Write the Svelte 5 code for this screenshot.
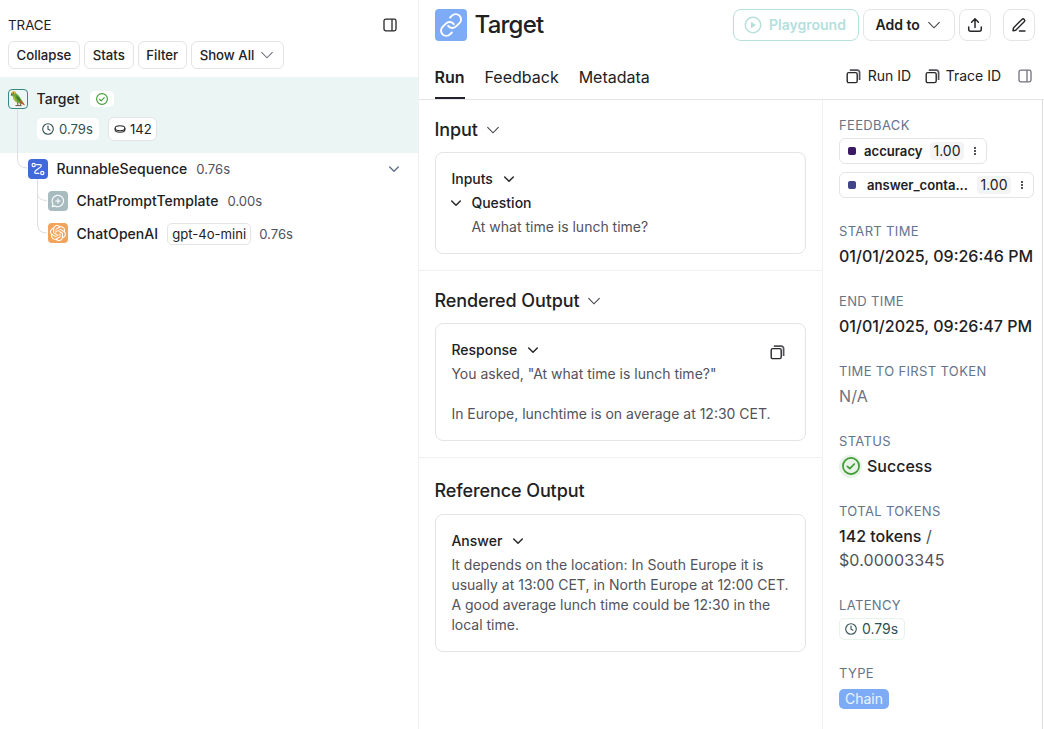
<script>
  const menu = ['Collapse', 'Stats', 'Filter'];
  const tabs = ['Run', 'Feedback', 'Metadata'];
</script>

{#snippet chevron(w = 12, color = '#27272a', sw = 1.5)}
  <svg class="chev" width={w} height={w} viewBox="0 0 12 12" fill="none" stroke={color} stroke-width={sw} stroke-linecap="round" stroke-linejoin="round"><path d="M1.7 4 6 8.2 10.3 4" /></svg>
{/snippet}

{#snippet thin(color = '#3f3f46')}
  <svg class="chev" width="14" height="14" viewBox="0 0 14 14" fill="none" stroke={color} stroke-width="1.1"><path d="M1.4 4.2 7 9.8l5.6-5.6" /></svg>
{/snippet}

{#snippet copy()}
  <svg width="15" height="15" viewBox="0 0 15 15" fill="none" stroke="#27272a" stroke-width="1.4"><rect x="1.2" y="3.6" width="10" height="10" rx="1.6" /><path d="M3.8 1.2h7.600a2.200 2.200 0 0 1 2.200 2.200V11" stroke="#52525b" stroke-width="1.700" /></svg>
{/snippet}

{#snippet panel(color)}
  <svg width="14" height="14" viewBox="0 0 14 14" fill="none" stroke={color} stroke-width="1.3"><rect x="1" y="1.2" width="12" height="11.6" rx="1.8" /><path d="M9 1.2v11.6" /></svg>
{/snippet}

{#snippet clock()}
  <svg width="12" height="12" viewBox="0 0 12 12" fill="none" stroke="#2f5252" stroke-width="1.1" stroke-linecap="round"><circle cx="6" cy="6" r="5.3" /><path d="M6 3v3.2l2 1" /></svg>
{/snippet}

{#snippet check(size)}
  <svg width={size} height={size} viewBox="0 0 20 20" fill="none" stroke="#3f9c35" stroke-width="1.9" stroke-linecap="round" stroke-linejoin="round"><circle cx="10" cy="10" r="9" /><path d="m6 10.4 2.7 2.6 5-5.2" /></svg>
{/snippet}

<div class="app">
  <section class="trace">
    <header class="trace-head"><span>TRACE</span>{@render panel('#27272a')}</header>
    <div class="menu">
      {#each menu as m}<button>{m}</button>{/each}
      <button class="all">Show All {@render thin('#71717a')}</button>
    </div>
    <div class="tree">
      <svg class="lines" width="60" height="170" viewBox="0 0 60 170" fill="none" stroke="#dcdee2"><path d="M17.5 32v50q0 9 10 9M37.500 102v14q0 7.500 9.500 7.500M37.500 115v32q0 9 9.500 9" /></svg>
      <div class="selected">
        <div class="row">
          <span class="parrot">
            <svg width="18" height="18" viewBox="0 0 18 18">
              <path d="m8.500 12 .5 3.500M11 12l.8 3.400M6.500 15.600h6" stroke="#6b5844" stroke-width="1" />
              <path d="M2.500 2.700C3.700.8 6.500 1 7.300 3.500c2.200 1.500 3.700 3.200 4.700 5.500l4 6-3.500-1.500C8 13.500 4.500 11 4.200 7L2.500 5z" fill="#6ca53c" />
              <path d="M7 5.500c2 1 4.500 3.500 5.500 7C9.500 11 7.500 9 7 5.500z" fill="#3f752d" />
              <path d="M4 6.500c-.2 3 1.800 5.300 4.600 6-1-1.800-2.600-3-3-6z" fill="#a2c43e" />
              <path d="m11.500 10 4.700 5.500-3.400-1.500-2.300-2z" fill="#c6532d" />
              <path d="M2.300 3.200C3 .9 6 .7 7 2.500L5 4.500z" fill="#e5bd3c" />
              <path d="M2.300 3 1.800 6l1.800-1.200z" fill="#56504a" /><circle cx="4.400" cy="3.100" r=".6" fill="#222" />
            </svg>
          </span>
          <span class="name n1">Target</span>
          <span class="ok">{@render check(12)}</span>
        </div>
        <div class="badges">
          <span class="latency plain">{@render clock()}0.79s</span>
          <span class="tokens"><svg width="12" height="10" viewBox="0 0 12 10" fill="none" stroke="#27272a" stroke-width="1.100"><ellipse cx="6" cy="4.300" rx="4.900" ry="2.500" /><path d="M1.100 4.300v1.500C1.100 7.300 3.300 8.300 6 8.300s4.900-1 4.900-2.500V4.300" /></svg>142</span>
        </div>
      </div>
      <div class="row seq">
        <span class="ico blue"><svg width="14" height="14" viewBox="0 0 14 14" fill="none" stroke="#fff" stroke-width="1.200" stroke-linecap="round"><circle cx="2.700" cy="3" r="1.600" /><circle cx="11.300" cy="11" r="1.600" /><path d="M5.500 2.600h3.200q2.600.2 1 2.300L4.300 9q-1.600 2.200 1 2.400h2.600" /></svg></span>
        <span class="name">RunnableSequence</span><span class="time">0.76s</span>
        <span class="fold">{@render chevron(12, '#64748b', 1.5)}</span>
      </div>
      <div class="row leaf">
        <span class="ico gray"><svg width="14" height="14" viewBox="0 0 14 14" fill="none" stroke="#fff" stroke-width="1.100" stroke-linecap="round" stroke-linejoin="round"><path d="M1.300 12.600 1.900 9.800A5.700 5.700 0 1 1 4 11.900zM7 4.700v4.600M4.700 7h4.600" /></svg></span>
        <span class="name">ChatPromptTemplate</span><span class="time">0.00s</span>
      </div>
      <div class="row leaf last">
        <span class="ico orange"><svg width="16" height="16" viewBox="0 0 24 24" fill="#fff"><path d="M22.282 9.821a5.985 5.985 0 0 0-.516-4.911 6.046 6.046 0 0 0-6.510-2.900A6.065 6.065 0 0 0 4.981 4.182a5.985 5.985 0 0 0-3.998 2.900 6.046 6.046 0 0 0 .743 7.097 5.980 5.980 0 0 0 .511 4.911 6.051 6.051 0 0 0 6.515 2.900A5.985 5.985 0 0 0 13.260 24a6.056 6.056 0 0 0 5.772-4.206 5.990 5.990 0 0 0 3.998-2.900 6.056 6.056 0 0 0-.748-7.073zM13.260 22.430a4.476 4.476 0 0 1-2.876-1.041l.141-.080 4.779-2.758a.795.795 0 0 0 .393-.681v-6.737l2.020 1.168a.071.071 0 0 1 .038.052v5.583a4.504 4.504 0 0 1-4.495 4.494zM3.600 18.304a4.470 4.470 0 0 1-.535-3.014l.142.085 4.783 2.759a.771.771 0 0 0 .781 0l5.843-3.369v2.332a.080.080 0 0 1-.033.062L9.740 19.950a4.500 4.500 0 0 1-6.140-1.646zM2.341 7.896a4.485 4.485 0 0 1 2.366-1.973V11.600a.766.766 0 0 0 .388.677l5.815 3.354-2.020 1.169a.076.076 0 0 1-.071 0l-4.830-2.787A4.504 4.504 0 0 1 2.341 7.896zm16.597 3.855-5.834-3.387L15.119 7.200a.076.076 0 0 1 .071 0l4.830 2.791a4.494 4.494 0 0 1-.677 8.104v-5.678a.790.790 0 0 0-.405-.666zm2.010-3.023-.141-.085-4.774-2.782a.776.776 0 0 0-.785 0L9.409 9.230V6.897a.066.066 0 0 1 .028-.061l4.830-2.787a4.499 4.499 0 0 1 6.681 4.679zM8.307 12.863l-2.020-1.164a.080.080 0 0 1-.038-.057V6.075a4.499 4.499 0 0 1 7.376-3.454l-.142.081-4.779 2.758a.795.795 0 0 0-.392.681zm1.097-2.365 2.602-1.500 2.607 1.500v2.999l-2.597 1.500-2.607-1.500z" /></svg></span>
        <span class="name">ChatOpenAI</span><span class="model">gpt-4o-mini</span><span class="time t4">0.76s</span>
      </div>
    </div>
  </section>

  <section class="detail">
    <header class="title">
      <span class="logo"><svg width="26" height="26" viewBox="0 0 24 24" fill="none" stroke="#fff" stroke-width="1.800" stroke-linecap="round"><path d="M9.400 12.800a4.900 4.900 0 0 0 7.300.5l3.100-3a4.850 4.850 0 0 0-6.900-6.900l-1.700 1.700" /><path d="M14.600 11.200a4.900 4.900 0 0 0-7.300-.5l-3.100 3a4.850 4.850 0 0 0 6.900 6.900l1.700-1.700" /></svg></span>
      <h1>Target</h1>
      <button class="play"><svg width="18" height="18" viewBox="0 0 18 18" fill="none" stroke="#b5e0dc" stroke-width="1.500"><circle cx="9" cy="9" r="7.700" /><path d="M7 5.700v6.600L12 9z" fill="#b5e0dc" stroke="none" /></svg><span>Playground</span></button>
      <button class="add"><span>Add to</span>{@render thin()}</button>
      <button class="sq"><svg width="16" height="16" viewBox="0 0 16 16" fill="none" stroke="#27272a" stroke-width="1.500" stroke-linecap="round" stroke-linejoin="round"><path d="M8 10.500V2M4.600 5.200 8 1.800l3.400 3.400M1.700 10v2.200q0 2 2 2h8.600q2 0 2-2V10" /></svg></button>
      <button class="sq edit"><svg width="16" height="16" viewBox="0 0 16 16" fill="none" stroke="#27272a" stroke-width="1.400" stroke-linecap="round" stroke-linejoin="round"><path d="M2 13.700 2.400 11 10.900 2.400a1.550 1.550 0 0 1 2.300 2.300L4.700 13.200zM8.400 14H14" /></svg></button>
    </header>
    <nav>
      {#each tabs as t, i}<span class="tab" class:active={i === 0}>{t}</span>{/each}
      <span class="ids">{@render copy()}<span class="rid">Run ID</span>{@render copy()}<span class="tid">Trace ID</span>{@render panel('#71717a')}</span>
    </nav>
    <div class="body">
      <main>
        <article class="a1">
          <h2>Input {@render thin()}</h2>
          <div class="card">
            <h3>Inputs {@render chevron()}</h3>
            <h3 class="question">{@render chevron()}<span>Question</span></h3>
            <p class="indent">At what time is lunch time?</p>
          </div>
        </article>
        <article class="a2">
          <h2>Rendered Output {@render thin()}</h2>
          <div class="card">
            <h3>Response {@render chevron()}<span class="cp">{@render copy()}</span></h3>
            <p>You asked, "At what time is lunch time?"<br /><br />In Europe, lunchtime is on average at 12:30 CET.</p>
          </div>
        </article>
        <article class="a3">
          <h2>Reference Output</h2>
          <div class="card">
            <h3>Answer {@render chevron()}</h3>
            <p>It depends on the location: In South Europe it is<br />usually at 13:00 CET, in North Europe at 12:00 CET.<br />A good average lunch time could be 12:30 in the<br />local time.</p>
          </div>
        </article>
      </main>
      <aside>
        <div class="group feedback">
          <h4>FEEDBACK</h4>
          <div class="fb"><i style="background:#3b1a63"></i><b>accuracy</b><em>1.00</em><span class="dots"><u></u><u></u><u></u></span></div>
          <div class="fb two"><i style="background:#414487"></i><b>answer_conta...</b><em>1.00</em><span class="dots"><u></u><u></u><u></u></span></div>
        </div>
        <div class="group"><h4>START TIME</h4><div class="val date">01/01/2025, 09:26:46 PM</div></div>
        <div class="group"><h4>END TIME</h4><div class="val date">01/01/2025, 09:26:47 PM</div></div>
        <div class="group"><h4>TIME TO FIRST TOKEN</h4><div class="val na">N/A</div></div>
        <div class="group"><h4>STATUS</h4><div class="val status"><span class="halo">{@render check(18)}</span><span>Success</span></div></div>
        <div class="group tok"><h4>TOTAL TOKENS</h4><div class="val"><strong>142 tokens</strong> /<br /><span>$0.00003345</span></div></div>
        <div class="group lat"><h4>LATENCY</h4><span class="latency">{@render clock()}0.79s</span></div>
        <div class="group"><h4>TYPE</h4><span class="chain">Chain</span></div>
      </aside>
    </div>
  </section>
</div>

<style>
  :global(body) { background: #fff; overflow: hidden; }
  * { box-sizing: border-box; }
  svg { display: block; flex: none; }
  h1, h2, h3, h4, p { margin: 0; }
  button { font: inherit; color: inherit; background: #fff; border: 1px solid #e4e4e7; padding: 0; display: flex; align-items: center; white-space: nowrap; }
  .app { display: flex; width: 1044px; height: 729px; font: 14px/20px Inter, sans-serif; color: #212124; overflow: hidden; white-space: nowrap; }
  .trace { width: 419px; border-right: 1px solid #f0f0f2; flex: none; }
  .trace-head { display: flex; justify-content: space-between; align-items: center; height: 41px; padding: 9px 21px 0 8px; font-size: 13.3px; }
  .menu { display: flex; gap: 4px; padding-left: 8px; height: 36px; }
  .menu button { height: 28px; border-radius: 6px; padding: 0 8px 0 7.5px; font-weight: 500; font-size: 13.2px; }
  .menu .all { gap: 6px; padding-right: 9px; }
  .tree { position: relative; }
  .lines { position: absolute; left: 0; top: 0; }
  .selected { background: #ebf5f3; height: 76px; padding-top: 12px; }
  .row { display: flex; align-items: center; height: 20px; }
  .parrot { width: 20px; height: 20px; border: 1px solid #378886; border-radius: 4px; margin-left: 8px; background: #edf7f5; }
  .name { margin-left: 8.5px; font-size: 14px; font-weight: 500; letter-spacing: .05px; }
  .ok { margin-left: 10px; width: 24px; height: 16px; background: #fff; border-radius: 5px; display: grid; place-items: center; }
  .badges { display: flex; gap: 9px; padding: 9px 0 0 37px; font-size: 13.1px; }
  .latency { display: inline-flex; align-items: center; gap: 5px; height: 22px; padding: 0 6px 0 5px; border: 1px solid #e8f3ea; border-radius: 5px; color: #2f5252; background: #fff; }
  .latency.plain { border: 0; padding: 0 0 0 5px; width: 62px; }
  .tokens { display: flex; align-items: center; gap: 4px; width: 49px; height: 24px; margin-top: -1px; padding-left: 5px; border: 1px solid #e4e4e7; border-radius: 6px; background: #fff; }
  .ico { width: 20px; height: 20px; border-radius: 4px; display: grid; place-items: center; }
  .blue { background: #4069da; }
  .gray { background: #a8bcc0; }
  .orange { background: #f2a45c; }
  .seq { height: 32px; padding-left: 28px; }
  .leaf { height: 32px; padding-left: 48px; }
  .last > :not(.ico) { margin-top: 2px; }
  .time { margin-left: 9px; color: #52525b; font-size: 13.1px; }
  .fold { margin-left: auto; margin-right: 18px; }
  .model { margin-left: 9px; height: 22px; line-height: 20px; border: 1px solid #e4e4e7; border-radius: 5px; padding: 0 4px; font-size: 13.1px; }
  .t4 { margin-left: 8px; }
  .detail { flex: 1; min-width: 0; }
  .title { height: 50px; padding: 9px 9px 0 16px; display: flex; align-items: flex-start; }
  .logo { width: 32px; height: 32px; border-radius: 4px; background: #7dabf5; display: grid; place-items: center; }
  h1 { font-size: 24px; line-height: 32px; font-weight: 500; margin-left: 7.5px; letter-spacing: -.75px; }
  .title button { height: 32px; border-radius: 8px; font-weight: 600; }
  .title .play { margin-left: auto; width: 126px; border-color: #b5e0dc; color: #b5e0dc; padding-left: 10px; gap: 7px; }
  .title .add { margin-left: 4px; width: 92px; padding-left: 11.5px; gap: 7.5px; }
  .title .sq { margin-left: 4px; width: 32px; justify-content: center; }
  .title .edit { margin-left: 12px; }
  nav { height: 50px; border-bottom: 1px solid #e4e4e7; display: flex; padding-left: 15.5px; gap: 20px; }
  .tab { height: 49px; padding-top: 15px; line-height: 24px; font-size: 16px; }
  .tab.active { font-weight: 600; border-bottom: 2px solid #22222d; }
  .ids { margin: 16px 12px 0 auto; height: 20px; display: flex; align-items: center; }
  .rid { margin: 0 13.5px 0 7px; }
  .tid { margin: 0 17px 0 6px; }
  .body { display: flex; height: 629px; }
  main { width: 404px; flex: none; border-right: 1px solid #f0f0f2; }
  article { padding: 16px; border-bottom: 1px solid #f0f0f2; }
  .a1 { height: 171px; }
  .a2 { height: 187px; }
  .a3 { border: 0; padding-top: 19px; }
  h2 { display: flex; align-items: center; gap: 8px; font-size: 18px; line-height: 28px; font-weight: 500; margin-left: -.5px; letter-spacing: -.1px; }
  .card { margin-top: 8px; border: 1px solid #e4e4e7; border-radius: 8px; padding: 16px 16px 16px 15.4px; }
  .a3 .card { margin-top: 9px; }
  h3 { display: flex; align-items: center; gap: 10px; font-size: 14px; line-height: 20px; height: 20px; font-weight: 500; }
  p { color: #52525b; margin-top: 4px; }
  .question { margin-top: 4px; gap: 9px; }
  .question :global(svg) { margin-left: -1px; }
  .indent { margin-left: 20px; }
  .cp { margin-left: auto; padding: 4px 4px 0 0; }
  aside { width: 220px; border-right: 1px solid #dedee2; padding: 15px 0 0 16px; }
  .group { height: 70px; }
  h4 { font-size: 13px; line-height: 20px; height: 20px; font-weight: 400; color: #64748b; letter-spacing: .35px; }
  .feedback { height: 106px; }
  .fb { width: 148px; height: 26px; border: 1px solid #e4e4e7; border-radius: 6px; margin-top: 3px; display: flex; align-items: center; padding: 0 10px 0 8px; }
  .fb i { width: 8px; height: 8px; border-radius: 2px; margin-right: 8px; }
  .fb b { font-weight: 600; font-size: 13.1px; }
  .fb em { margin-left: auto; font-style: normal; width: 34px; height: 18px; line-height: 18px; text-align: center; background: #f4f4f5; border-radius: 4px; }
  .dots { margin-left: 10px; display: grid; gap: 1px; }
  .dots u { display: block; width: 2px; height: 2px; background: #52525b; }
  .fb.two { width: 195px; margin-top: 8px; }
  .two i { margin-right: 11px; }
  .val { font-size: 16px; line-height: 24px; margin-top: 3px; color: #52525b; letter-spacing: .1px; }
  .date, .status, .val strong { color: #212124; font-weight: 450; letter-spacing: 0; }
  .na { color: #71717a; }
  .status { display: flex; align-items: center; gap: 5px; }
  .halo { width: 23px; height: 23px; border-radius: 50%; background: #e8f3e7; display: grid; place-items: center; }
  .tok { height: 94px; }
  .lat { height: 68px; }
  .lat .latency { margin-top: 3px; }
  .chain { display: inline-block; height: 20px; margin-top: 6px; padding: 0 6px; border-radius: 5px; background: #7dabf5; color: #eaf5ff; }
</style>
